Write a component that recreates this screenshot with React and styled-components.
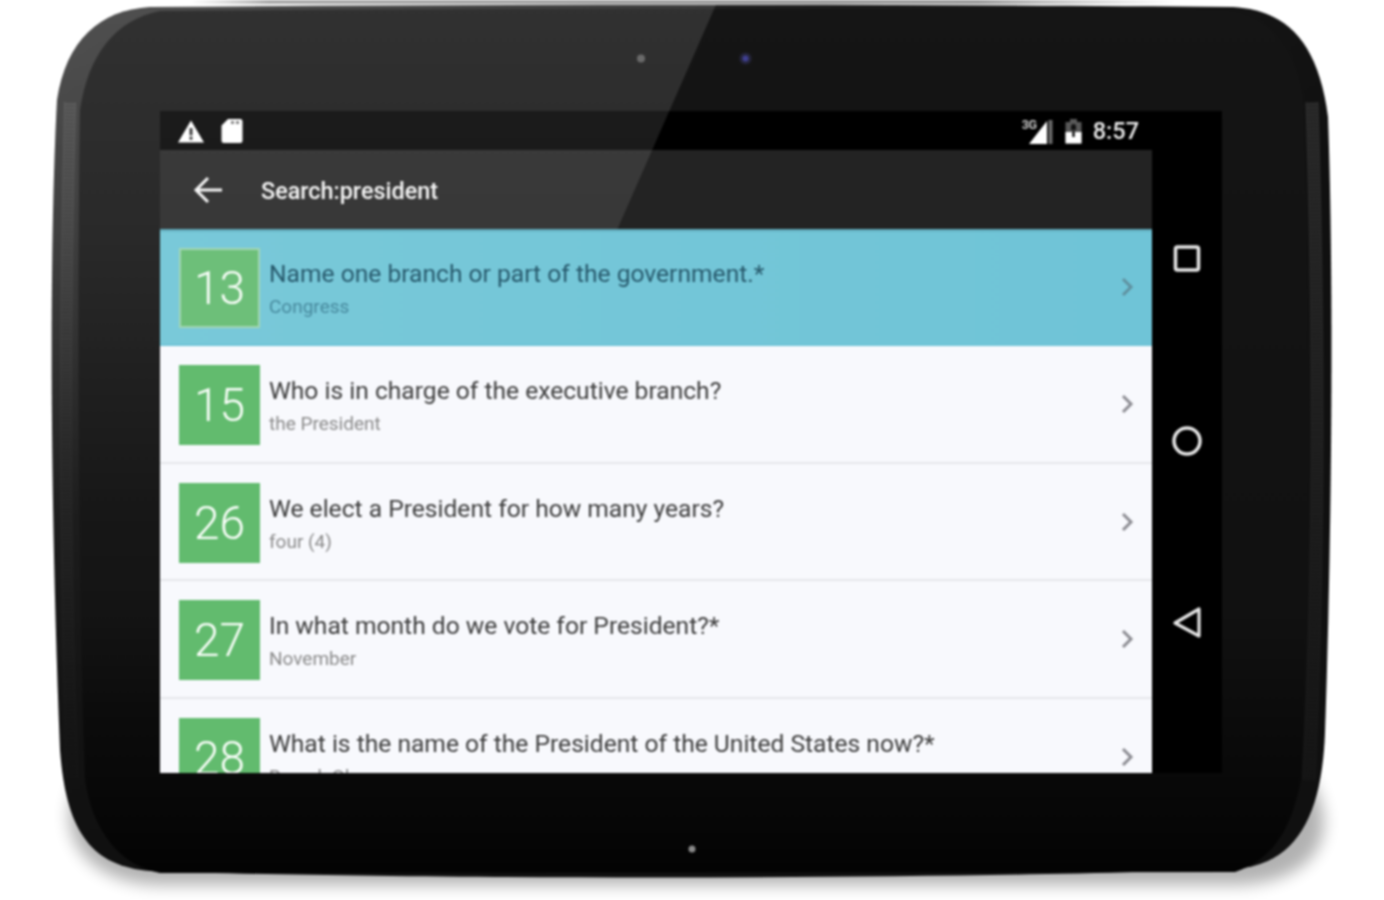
import React from "react";
import styled, { createGlobalStyle } from "styled-components";

const Global = createGlobalStyle`
  html, body { margin: 0; padding: 0; background: #fff; }
  body { font-family: Roboto, "Noto Sans", sans-serif; overflow: hidden; }
`;

const Stage = styled.div`
  position: relative;
  width: 1384px;
  height: 900px;
  overflow: hidden;
  box-sizing: border-box;
  padding: 111px 162px 127px 160px;
  background: #fff;
  filter: blur(0.8px);
`;

const Shell = styled.svg`
  position: absolute;
  left: 0;
  top: 0;
  width: 1384px;
  height: 900px;
`;

const Glare = styled.svg`
  position: absolute;
  left: 0;
  top: 0;
  width: 1384px;
  height: 900px;
  z-index: 1;
  pointer-events: none;
`;

const Screen = styled.div`
  position: relative;
  width: 1062px;
  height: 662px;
  background: #000;
  display: flex;
  flex-direction: column;
`;

const StatusBar = styled.div`
  height: 39px;
  flex: none;
  display: flex;
  align-items: center;
  padding: 0 83px 0 18px;
  color: #e4e4e4;
`;

const StatusGroup = styled.div`
  display: flex;
  align-items: center;
  gap: ${(p) => p.$gap}px;
`;

const StatusSpacer = styled.div`
  flex: 1;
`;

const SignalWrap = styled.div`
  position: relative;
  width: 32px;
  height: 26px;
  display: flex;
  justify-content: flex-end;
  align-items: flex-end;
`;

const SignalLabel = styled.span`
  position: absolute;
  left: 0;
  top: 0;
  font-size: 12.5px;
  line-height: 13px;
  font-weight: 700;
  letter-spacing: -0.4px;
  color: #c4c4c4;
`;

const Clock = styled.span`
  font-size: 23.5px;
  line-height: 28px;
  font-weight: 500;
  color: #ececec;
`;

const Body = styled.div`
  flex: 1;
  display: flex;
  min-height: 0;
`;

const Main = styled.div`
  width: 992px;
  flex: none;
  display: flex;
  flex-direction: column;
`;

const Toolbar = styled.div`
  height: 79px;
  flex: none;
  background: #232323;
  display: flex;
  align-items: center;
  padding-left: 33px;
  gap: 38px;
`;

const ToolbarTitle = styled.span`
  font-size: 23.4px;
  line-height: 32px;
  padding-top: 3px;
  font-weight: 500;
  color: #f6f6f6;
`;

const List = styled.div`
  position: relative;
  z-index: 2;
  flex: 1;
  min-height: 0;
  overflow: hidden;
  background: #f8f9fd;
`;

const Row = styled.div`
  height: 117.4px;
  box-sizing: border-box;
  display: flex;
  align-items: flex-start;
  padding: 19px 18px 0 19px;
  border-bottom: 2px solid ${(p) => (p.$active ? "#6fc4d7" : "#e6e7eb")};
  background: ${(p) =>
    p.$active ? "linear-gradient(90deg, #79c9d9, #6fc4d7)" : "#f8f9fd"};
  box-shadow: ${(p) => (p.$active ? "inset 0 3px 2px -1px #5ea6b6" : "none")};
`;

const Badge = styled.div`
  width: 81px;
  height: 80px;
  flex: none;
  box-sizing: border-box;
  display: flex;
  align-items: center;
  justify-content: center;
  background: ${(p) => (p.$active ? "#6dbf79" : "#62bb6e")};
  border: ${(p) => (p.$active ? "2px solid #a2d6b4" : "none")};
  color: #fbfffb;
  font-size: 46px;
  font-weight: 300;
`;

const TextCol = styled.div`
  flex: 1;
  padding: 10px 0 0 9px;
  min-width: 0;
`;

const Title = styled.div`
  font-size: 24.6px;
  line-height: 32px;
  color: ${(p) => (p.$active ? "#27596c" : "#3d3d3d")};
  white-space: nowrap;
`;

const Sub = styled.div`
  margin-top: 2px;
  font-size: 19px;
  line-height: 30px;
  color: ${(p) => (p.$active ? "#47899d" : "#8a8a8a")};
  white-space: nowrap;
`;

const Chevron = styled.svg`
  flex: none;
  margin-top: 29px;
  width: 14px;
  height: 20px;
  color: ${(p) => (p.$active ? "#5f909f" : "#8c8c92")};
`;

const Nav = styled.div`
  flex: 1;
  display: flex;
  flex-direction: column;
  align-items: center;
  padding-top: 89px;
  gap: 142px;
`;

const NavIcon = styled.svg`
  width: 40px;
  height: 40px;
  color: #e6e6e6;
`;

const SHELL =
  "M150 7 C500 4 900 4 1233 7 C1285 10 1318 40 1328 117 C1333 250 1333 500 1325 733 C1322 810 1300 860 1243 868 C1000 880 400 880 150 871 C90 866 66 830 60 750 C50 500 49 250 57 100 C66 40 100 10 150 7 Z";
const FACE =
  "M160 11 C500 8 900 8 1225 11 C1270 14 1295 50 1303 100 C1311 300 1311 600 1301 780 C1290 835 1270 860 1235 872 L160 873 C120 866 92 830 85 780 C78 600 77 300 80 110 C88 55 115 20 160 11 Z";

const rows = [
  { n: 13, t: "Name one branch or part of the government.*", s: "Congress", active: true },
  { n: 15, t: "Who is in charge of the executive branch?", s: "the President" },
  { n: 26, t: "We elect a President for how many years?", s: "four (4)" },
  { n: 27, t: "In what month do we vote for President?*", s: "November" },
  { n: 28, t: "What is the name of the President of the United States now?*", s: "Barack Obama" },
];

export default function App() {
  return (
    <>
      <Global />
      <Stage>
        <Shell viewBox="0 0 1384 900">
          <defs>
            <filter id="soft" x="-10%" y="-30%" width="120%" height="160%">
              <feGaussianBlur stdDeviation="8" />
            </filter>
            <linearGradient id="sliver" x1="0" x2="1" y1="0" y2="0">
              <stop offset="0" stopColor="#bbb" stopOpacity="0" />
              <stop offset="0.08" stopColor="#aaa" />
              <stop offset="0.8" stopColor="#999" />
              <stop offset="1" stopColor="#aaa" stopOpacity="0" />
            </linearGradient>
            <linearGradient id="rim" x1="0" x2="0.5" y1="0" y2="0.6">
              <stop offset="0" stopColor="#3a3a3a" />
              <stop offset="0.6" stopColor="#171717" />
              <stop offset="1" stopColor="#101010" />
            </linearGradient>
            <linearGradient id="face" x1="0" x2="0" y1="0" y2="1">
              <stop offset="0" stopColor="#151515" />
              <stop offset="0.7" stopColor="#111" />
              <stop offset="0.95" stopColor="#060606" />
              <stop offset="1" stopColor="#030303" />
            </linearGradient>
            <linearGradient id="grillL" x1="0" x2="0" y1="0" y2="1">
              <stop offset="0" stopColor="#4c4c4c" />
              <stop offset="0.5" stopColor="#262626" />
              <stop offset="1" stopColor="#161616" />
            </linearGradient>
            <linearGradient id="grillR" x1="0" x2="0" y1="0" y2="1">
              <stop offset="0" stopColor="#2e2e2e" />
              <stop offset="1" stopColor="#181818" />
            </linearGradient>
            <linearGradient id="glareFill" gradientUnits="userSpaceOnUse" x1="0" y1="0" x2="0" y2="720">
              <stop offset="0" stopColor="#fff" stopOpacity="0.12" />
              <stop offset="0.32" stopColor="#fff" stopOpacity="0.095" />
              <stop offset="0.7" stopColor="#fff" stopOpacity="0.025" />
              <stop offset="1" stopColor="#fff" stopOpacity="0" />
            </linearGradient>
            <clipPath id="shellClip">
              <path d={SHELL} />
            </clipPath>
          </defs>
          <rect x="190" y="0" width="985" height="4" fill="url(#sliver)" />
          <path
            d="M85 770 C45 830 85 884 160 885 L1240 885 C1320 880 1345 830 1305 770 Z"
            fill="#000"
            opacity="0.3"
            filter="url(#soft)"
          />
          <path d={SHELL} fill="url(#rim)" />
          <path d={FACE} fill="url(#face)" />
          <path d="M70 102 C65 300 64 550 72 778" fill="none" stroke="url(#grillL)" strokeWidth="12" />
          <path d="M70 102 C65 300 64 550 72 778" fill="none" stroke="#000" strokeOpacity="0.3" strokeWidth="10" strokeDasharray="1.5 2" />
          <path d="M1312 102 C1318 300 1320 550 1309 780" fill="none" stroke="url(#grillR)" strokeWidth="13" />
          <path d="M1312 102 C1318 300 1320 550 1309 780" fill="none" stroke="#000" strokeOpacity="0.3" strokeWidth="11" strokeDasharray="1.5 2" />
          <circle cx="641" cy="58.5" r="4" fill="#575757" />
          <circle cx="745.5" cy="58.5" r="6" fill="#24243a" />
          <circle cx="745.5" cy="58.5" r="3" fill="#3f3f90" />
          <circle cx="692" cy="849" r="3.5" fill="#8a8a8a" />
        </Shell>

        <Screen>
          <StatusBar>
            <StatusGroup $gap={17}>
              <svg width="26" height="24" viewBox="0 0 27 24">
                <path d="M13.5 1 L27 24 H0 Z" fill="#fff" />
                <rect x="12" y="9" width="3" height="7.5" fill="#222" />
                <rect x="12" y="18" width="3" height="3" fill="#222" />
              </svg>
              <svg width="22" height="26" viewBox="0 0 22 26">
                <path d="M7 1 H19 a2.5 2.5 0 0 1 2.5 2.5 V22.5 a2.5 2.5 0 0 1 -2.5 2.5 H3 a2.5 2.5 0 0 1 -2.5 -2.5 V7.5 Z" fill="#fff" />
                <rect x="10" y="3" width="3" height="3" fill="#777" />
                <rect x="15" y="3" width="3" height="3" fill="#777" />
              </svg>
            </StatusGroup>
            <StatusSpacer />
            <StatusGroup $gap={11}>
              <SignalWrap>
                <SignalLabel>3G</SignalLabel>
                <svg width="26" height="24" viewBox="0 0 26 24">
                  <path d="M19 1 V24 H1 Z" fill="#fff" />
                  <path d="M20.5 0 L24.5 0 V24 H20.5 Z" fill="#6a6a6a" />
                </svg>
              </SignalWrap>
              <svg width="17" height="26" viewBox="0 0 17 26">
                <path d="M5 1 H12 V4 H16.5 V25.5 H0.5 V4 H5 Z" fill="#585858" />
                <path d="M0.5 14 H16.5 V25.5 H0.5 Z" fill="#fff" />
                <path d="M8.5 6 a2.5 2.5 0 0 1 2.5 2.5 V12 H6 V8.5 a2.5 2.5 0 0 1 2.5 -2.5 Z" fill="#111" />
                <path d="M8.5 13 V19" stroke="#111" strokeWidth="2.5" />
              </svg>
              <Clock>8:57</Clock>
            </StatusGroup>
          </StatusBar>
          <Body>
            <Main>
              <Toolbar>
                <svg width="30" height="30" viewBox="0 0 30 30" fill="none" stroke="#f4f4f4" strokeWidth="3">
                  <path d="M29 15 H3.5 M15 3 L3 15 L15 27" />
                </svg>
                <ToolbarTitle>Search:president</ToolbarTitle>
              </Toolbar>
              <List>
                {rows.map((r) => (
                  <Row key={r.n} $active={r.active}>
                    <Badge $active={r.active}>{r.n}</Badge>
                    <TextCol>
                      <Title $active={r.active}>{r.t}</Title>
                      <Sub $active={r.active}>{r.s}</Sub>
                    </TextCol>
                    <Chevron $active={r.active} viewBox="0 0 14 20" fill="none" stroke="currentColor" strokeWidth="3">
                      <path d="M3 2 L11 10 L3 18" />
                    </Chevron>
                  </Row>
                ))}
              </List>
            </Main>
            <Nav>
              <NavIcon viewBox="0 0 40 40" fill="none" stroke="currentColor" strokeWidth="3.5">
                <rect x="8.5" y="8" width="23" height="23" rx="2" />
              </NavIcon>
              <NavIcon viewBox="0 0 40 40" fill="none" stroke="currentColor" strokeWidth="3.5">
                <circle cx="20" cy="20" r="13" />
              </NavIcon>
              <NavIcon viewBox="0 0 40 40" fill="none" stroke="currentColor" strokeWidth="3.2" strokeLinejoin="round">
                <path d="M8 20 L32 6 V33 Z" />
              </NavIcon>
            </Nav>
          </Body>
        </Screen>

        <Glare viewBox="0 0 1384 900">
          <polygon
            points="0,0 718,0 617,230 400,773 0,773"
            fill="url(#glareFill)"
            clipPath="url(#shellClip)"
          />
        </Glare>
      </Stage>
    </>
  );
}
